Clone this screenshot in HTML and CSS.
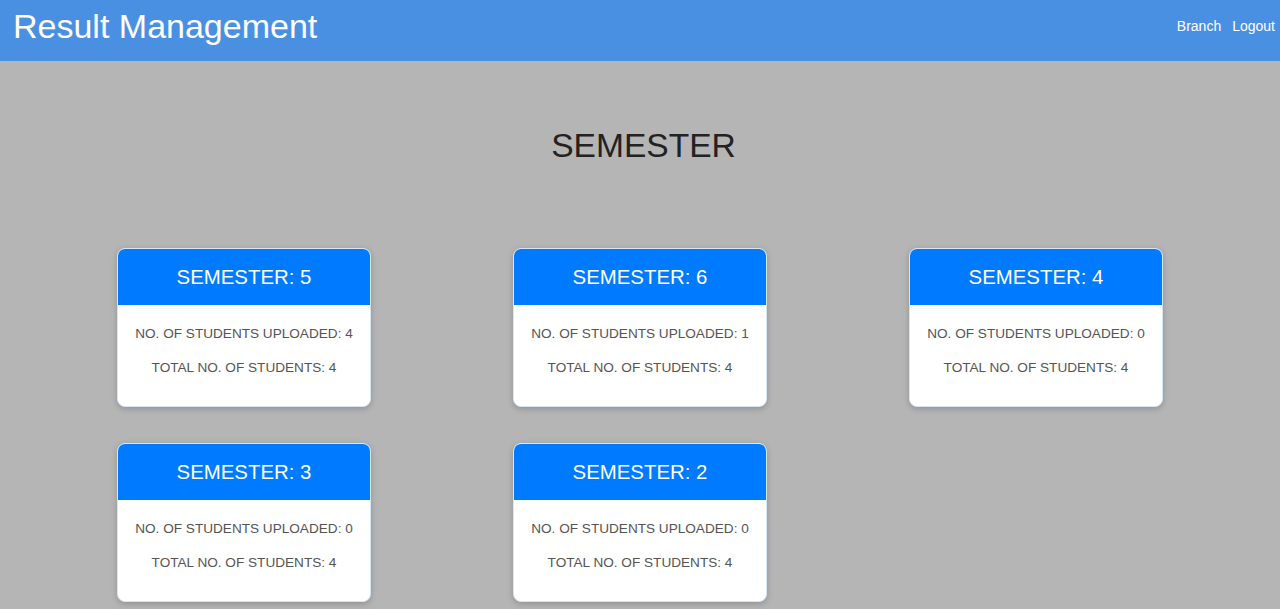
FILE: index.html
```html
<!DOCTYPE html>
<html lang="en">
<head>
<meta charset="utf-8">
<title>Result Management</title>
<link rel="stylesheet" href="styles.css">
</head>
<body>
<header class="topbar">
  <div class="brand">Result Management</div>
  <nav class="nav">
    <a href="#" class="nav-link">Branch</a>
    <a href="#" class="nav-link">Logout</a>
  </nav>
</header>
<main class="content">
  <h1 class="page-title">SEMESTER</h1>
  <section class="grid">
    <div class="card">
      <div class="card-head">SEMESTER: 5</div>
      <div class="card-body">
        <p>NO. OF STUDENTS UPLOADED: 4</p>
        <p>TOTAL NO. OF STUDENTS: 4</p>
      </div>
    </div>
    <div class="card">
      <div class="card-head">SEMESTER: 6</div>
      <div class="card-body">
        <p>NO. OF STUDENTS UPLOADED: 1</p>
        <p>TOTAL NO. OF STUDENTS: 4</p>
      </div>
    </div>
    <div class="card">
      <div class="card-head">SEMESTER: 4</div>
      <div class="card-body">
        <p>NO. OF STUDENTS UPLOADED: 0</p>
        <p>TOTAL NO. OF STUDENTS: 4</p>
      </div>
    </div>
    <div class="card">
      <div class="card-head">SEMESTER: 3</div>
      <div class="card-body">
        <p>NO. OF STUDENTS UPLOADED: 0</p>
        <p>TOTAL NO. OF STUDENTS: 4</p>
      </div>
    </div>
    <div class="card">
      <div class="card-head">SEMESTER: 2</div>
      <div class="card-body">
        <p>NO. OF STUDENTS UPLOADED: 0</p>
        <p>TOTAL NO. OF STUDENTS: 4</p>
      </div>
    </div>
  </section>
</main>
</body>
</html>
```
FILE: styles.css
```css
* { box-sizing: border-box; }
html, body {
  margin: 0;
  padding: 0;
}
body {
  background: #b5b5b5;
  font-family: "Liberation Sans", Arial, sans-serif;
  color: #222;
}
.topbar {
  height: 61px;
  background: #4a90e2;
  display: flex;
  align-items: center;
  justify-content: space-between;
  padding: 0 5px 10px 13px;
}
.brand {
  color: #fff;
  font-size: 34px;
  line-height: 40px;
}
.nav {
  display: flex;
  gap: 11px;
  align-self: flex-start;
  padding-top: 17px;
}
.nav-link {
  color: #fff;
  text-decoration: none;
  font-size: 14px;
  line-height: 18px;
}
.content {
  padding-top: 65px;
}
.page-title {
  margin: 0;
  text-align: center;
  font-weight: normal;
  font-size: 33.6px;
  line-height: 40px;
  color: #222;
  padding-left: 7px;
}
.grid {
  margin-top: 82px;
  display: grid;
  grid-template-columns: repeat(3, 254px);
  column-gap: 142px;
  row-gap: 36px;
  justify-content: center;
  padding: 0 0 20px 0;
}
.card {
  background: #fff;
  border-radius: 8px;
  overflow: hidden;
  box-shadow: 0 2px 6px rgba(0,0,0,0.2);
  border: 1px solid #d6e6f7;
}
.card-head {
  background: #007bff;
  color: #fff;
  text-align: center;
  font-size: 20.4px;
  height: 56px;
  line-height: 56px;
}
.card-body {
  padding: 19px 8px 28px;
  display: flex;
  flex-direction: column;
  gap: 14px;
  text-align: center;
}
.card-body p {
  margin: 0;
  font-size: 13.6px;
  line-height: 20px;
  color: #555;
}
```
